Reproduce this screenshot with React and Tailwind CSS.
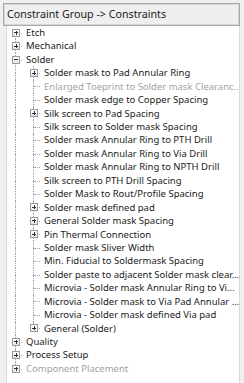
import React from 'react';

const solderChildren = [
  { label: 'Solder mask to Pad Annular Ring', plus: true },
  { label: 'Enlarged Toeprint to Solder mask Clearanc...', disabled: true },
  { label: 'Solder mask edge to Copper Spacing' },
  { label: 'Silk screen to Pad Spacing', plus: true },
  { label: 'Silk screen to Solder mask Spacing' },
  { label: 'Solder mask Annular Ring to PTH Drill' },
  { label: 'Solder mask Annular Ring to Via Drill' },
  { label: 'Solder mask Annular Ring to NPTH Drill' },
  { label: 'Silk screen to PTH Drill Spacing' },
  { label: 'Solder Mask to Rout/Profile Spacing' },
  { label: 'Solder mask defined pad', plus: true },
  { label: 'General Solder mask Spacing', plus: true },
  { label: 'Pin Thermal Connection', plus: true },
  { label: 'Solder mask Sliver Width' },
  { label: 'Min. Fiducial to Soldermask Spacing' },
  { label: 'Solder paste to adjacent Solder mask clear...' },
  { label: 'Microvia - Solder mask Annular Ring to Vi...' },
  { label: 'Microvia - Solder mask to Via Pad Annular ...' },
  { label: 'Microvia - Solder mask defined Via pad' },
  { label: 'General (Solder)', plus: true },
];

const rows = [
  { root: true, label: 'Etch', plus: true, first: true },
  { root: true, label: 'Mechanical', plus: true },
  { root: true, label: 'Solder', minus: true },
  ...solderChildren.map((c, i) => ({ ...c, last: i === solderChildren.length - 1 })),
  { root: true, label: 'Quality', plus: true },
  { root: true, label: 'Process Setup', plus: true },
  { root: true, label: 'Component Placement', plus: true, disabled: true, lastRoot: true },
];

const Box = ({ minus }) => (
  <span className="absolute left-[2px] top-1/2 z-10 flex h-[8px] w-[8px] -translate-y-1/2 items-center justify-center border border-[#9a9a9a] bg-[linear-gradient(#ffffff,#e6e6e6)]">
    <span className="absolute h-px w-[4px] bg-[#2f2f2f]" />
    {!minus && <span className="absolute h-[4px] w-px bg-[#2f2f2f]" />}
  </span>
);

const Guide = ({ up, down, stub, box, minus }) => (
  <span className="relative h-full w-[12px] shrink-0">
    {up && <span className="absolute left-[5px] top-0 h-1/2 border-l border-dotted border-[#a5a5a5]" />}
    {down && <span className="absolute bottom-0 left-[5px] h-1/2 border-l border-dotted border-[#a5a5a5]" />}
    {stub && <span className="absolute left-[6px] top-1/2 w-[6px] border-t border-dotted border-[#a5a5a5]" />}
    {box && <Box minus={minus} />}
  </span>
);

const Row = ({ row }) => {
  const text = (
    <span className={`whitespace-nowrap pl-[3px] ${row.disabled ? 'text-[#a3a3a3]' : 'text-[#1b1b1b]'}`}>{row.label}</span>
  );
  if (row.root) {
    return (
      <div className="flex h-[13.44px] items-center">
        <span className="w-[3px] shrink-0" />
        <Guide up={!row.first} down={!row.lastRoot} stub box={row.plus || row.minus} minus={row.minus} />
        <span className="w-[1px] shrink-0" />
        {text}
      </div>
    );
  }
  return (
    <div className="flex h-[13.44px] items-center">
      <span className="w-[3px] shrink-0" />
      <Guide up down />
      <span className="w-[6px] shrink-0" />
      <Guide up down={!row.last} stub box={row.plus} />
      <span className="w-[1px] shrink-0" />
      {text}
    </div>
  );
};

export default function App() {
  return (
    <div className="flex h-[383px] w-[244px] flex-col overflow-hidden bg-[#f0f0f0] font-['Noto_Sans','Liberation_Sans',sans-serif] text-[9.5px] leading-none">
      <div className="mx-[3px] mt-[3px] flex h-[23px] w-[237px] shrink-0 items-center border border-[#a9a9a9] bg-[#efefef] pl-[3px] text-[10.7px] text-[#1b1b1b] shadow-[inset_0_0_0_1px_#d6d6d6]">
        Constraint Group -&gt; Constraints
      </div>
      <div className="ml-[6px] flex w-[234px] flex-1 flex-col overflow-hidden border-l border-r border-[#d9d9d9] bg-white">
        {rows.map((row, i) => (
          <Row key={i} row={row} />
        ))}
      </div>
    </div>
  );
}
